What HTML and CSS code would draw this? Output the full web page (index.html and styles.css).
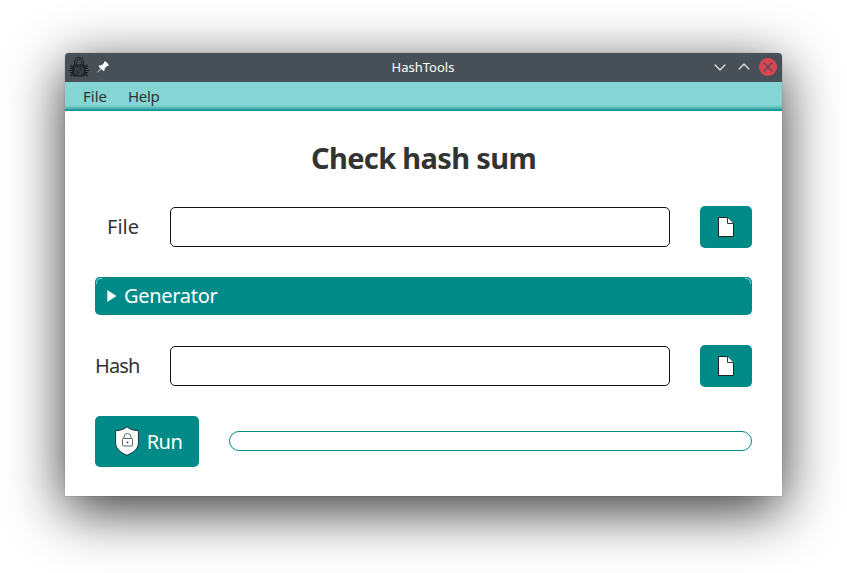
FILE: index.html
```html
<!DOCTYPE html>
<html lang="en">
<head>
<meta charset="utf-8">
<title>HashTools</title>
<link rel="stylesheet" href="styles.css">
</head>
<body>
<div class="window">
  <header class="titlebar">
    <div class="title-left">
      <svg class="app-icon" width="20" height="20" viewBox="0 0 20 20" fill="none" stroke="#1d2022">
        <path d="M5.500 8V5a4.500 4.500 0 0 1 9 0v3M7.500 8V5.200a2.500 2.500 0 0 1 5 0V8" stroke-width="1"/>
        <rect x="4" y="8" width="12" height="11" rx="1.500" fill="#2b3034" stroke-width="1.200"/>
        <path d="M4 10H2V7.500M4 13.500H0M4 17H2v2.500M16 10h2V7.500M16 13.500h4M16 17h2v2.500M1 11.500h3M1 15.500h3M16 11.500h3M16 15.500h3" stroke-width="1.200"/>
        <path d="M8.500 11h3M8.500 11v2l3 1.500V17h-3M6.500 11v5M13.500 11v5" stroke="#4e565d" stroke-width=".8"/>
      </svg>
      <svg class="pin" width="12" height="12" viewBox="0 0 12 12">
        <path fill="#fff" d="M7.200.5h1.500L11.500 3.300v1.500L9.800 5.200 7.800 7.200 7.500 9.500 6.500 10 4.300 8 .6 11.600.2 11.200 3.600 7.500 1.500 5.500 2.200 4.400l2.600-.3L7 2z"/>
      </svg>
    </div>
    <div class="caption">HashTools</div>
    <div class="controls">
      <svg width="12" height="18" viewBox="0 0 12 18" fill="none" stroke="#fff" stroke-width="1.100"><path d="M.7 6.700l5.300 5.300 5.300-5.300"/></svg>
      <svg width="12" height="18" viewBox="0 0 12 18" fill="none" stroke="#fff" stroke-width="1.100"><path d="M.7 11.300L6 6l5.300 5.300"/></svg>
      <svg width="18" height="18" viewBox="0 0 18 18"><circle cx="9" cy="9" r="9" fill="#da4453"/><path d="M4.500 4.500l9 9M13.500 4.500l-9 9" stroke="#475057" stroke-width="1.100"/></svg>
    </div>
  </header>
  <nav class="menubar"><span class="menu-file">File</span><span class="menu-help">Help</span></nav>
  <main class="content">
    <h1><span>Check hash sum</span></h1>
    <div class="row">
      <label class="label-file" for="file">File</label>
      <input id="file" type="text">
      <button class="browse" aria-label="Open file">
        <svg width="16" height="20" viewBox="0 0 16 20"><path d="M.5.5H9.500l6 6v13H.5z" fill="#fff" stroke="#222"/><path d="M9.500 .5v6h6" fill="#fff" stroke="#333"/></svg>
      </button>
    </div>
    <div class="generator">
      <svg width="10" height="12" viewBox="0 0 10 12"><path d="M.3 0L9.500 6 .3 12z" fill="#fff"/></svg>
      <span>Generator</span>
    </div>
    <div class="row">
      <label class="label-hash" for="hash">Hash</label>
      <input id="hash" type="text">
      <button class="browse" aria-label="Open hash file">
        <svg width="16" height="20" viewBox="0 0 16 20"><path d="M.5.5H9.500l6 6v13H.5z" fill="#fff" stroke="#222"/><path d="M9.500 .5v6h6" fill="#fff" stroke="#333"/></svg>
      </button>
    </div>
    <div class="run-row">
      <button class="run">
        <svg width="24" height="30" viewBox="0 0 24 30">
          <path d="M12 .7C9.500 3.200 5 4.600.6 4.600V17c0 6 5.400 9.700 11.400 12.300C18 26.700 23.400 23 23.400 17V4.600C19 4.600 14.500 3.200 12 .7z" fill="#fff" stroke="#173434" stroke-width="1"/>
          <g fill="none" stroke="#5b6767"><rect x="7.500" y="12.500" width="10" height="7.500" rx=".8"/><path d="M9 12.500v-1.500a3.500 3.500 0 0 1 7 0v1.500"/></g>
          <circle cx="12.500" cy="16.300" r=".9" fill="#333"/>
        </svg>
        <span>Run</span>
      </button>
      <div class="progress"></div>
    </div>
  </main>
</div>
</body>
</html>
```
FILE: styles.css
```css
* { box-sizing: border-box; }
body {
  margin: 0;
  height: 573px;
  padding: 53px 65px 0;
  overflow: hidden;
  background: #fff;
  color: #333;
  font-family: "Noto Sans", sans-serif;
}
.window {
  width: 717px;
  height: 443px;
  background: #fff;
  border-radius: 4px 4px 0 0;
  box-shadow: 0 0 1px rgba(0, 0, 0, .5), 0 14px 56px rgba(0, 0, 0, .8);
}
.titlebar {
  display: grid;
  grid-template-columns: 1fr auto 1fr;
  align-items: center;
  height: 29px;
  padding: 0 5px 0 4px;
  border-radius: 4px 4px 0 0;
  background: #475057;
  color: #fcfcfc;
}
.title-left { display: flex; align-items: center; gap: 8px; margin-bottom: 1px; }
.pin { margin-bottom: 1px; }
.caption { font-size: 13px; line-height: 18px; margin-bottom: 2px; }
.controls { display: flex; justify-content: flex-end; gap: 12px; margin-bottom: 1px; }
.controls svg:last-child { margin-left: -3px; }
.menubar {
  display: flex;
  height: 29px;
  padding-left: 18px;
  gap: 21px;
  font-size: 15px;
  line-height: 29px;
  background: linear-gradient(#84d5d4 0, #84d5d4 23px, #6dc4c3 25px, #008b89 29px);
}
.menu-file { width: 24px; }
.menu-help { letter-spacing: -.3px; }
.content { padding: 30px 30px 29px; }
h1 {
  margin: 0 0 30px;
  height: 35px;
  font-size: 29px;
  line-height: 33px;
  text-align: center;
  letter-spacing: -.65px;
}
.row { display: flex; align-items: center; height: 42px; }
.row label { width: 45px; margin-right: 30px; text-align: right; font-size: 20px; line-height: 42px; white-space: nowrap; }
.row .label-file { padding-right: 1px; }
.row .label-hash { text-align: left; letter-spacing: -.9px; }
input {
  flex: 1;
  height: 40px;
  min-width: 0;
  margin: 0 30px 0 0;
  padding: 0 10px;
  border: 1px solid #111;
  border-radius: 5px;
  background: #fff;
  font: 20px "Noto Sans", sans-serif;
}
button {
  display: flex;
  align-items: center;
  justify-content: center;
  padding: 0;
  border: 0;
  border-radius: 5px;
  background: #008b89;
  color: #fff;
  font: 20px "Noto Sans", sans-serif;
}
.browse { width: 52px; height: 42px; }
.generator {
  position: relative;
  display: flex;
  align-items: center;
  height: 38px;
  margin: 29px 0 30px;
  padding-left: 12px;
  gap: 7px;
  border-radius: 5px;
  background: #008b89;
  color: #fff;
  font-size: 20px;
}
.generator span { letter-spacing: -.3px; margin-bottom: 2px; }
.generator::before,
.generator::after {
  content: "";
  position: absolute;
  top: 1px;
  width: 5px;
  height: 5px;
  border-top: 1px solid #84d5d4;
}
.generator::before { left: 1px; border-left: 1px solid #84d5d4; border-radius: 5px 0 0; }
.generator::after { right: 1px; border-right: 1px solid #84d5d4; border-radius: 0 5px 0 0; }
.run-row { display: flex; align-items: center; margin-top: 29px; gap: 30px; }
.run { width: 104px; height: 51px; gap: 8px; padding: 0 0 1px 3px; }
.run span { letter-spacing: -.5px; }
.progress { flex: 1; height: 20px; margin-bottom: 1px; border: 1px solid #008b89; border-radius: 10px; }
```
